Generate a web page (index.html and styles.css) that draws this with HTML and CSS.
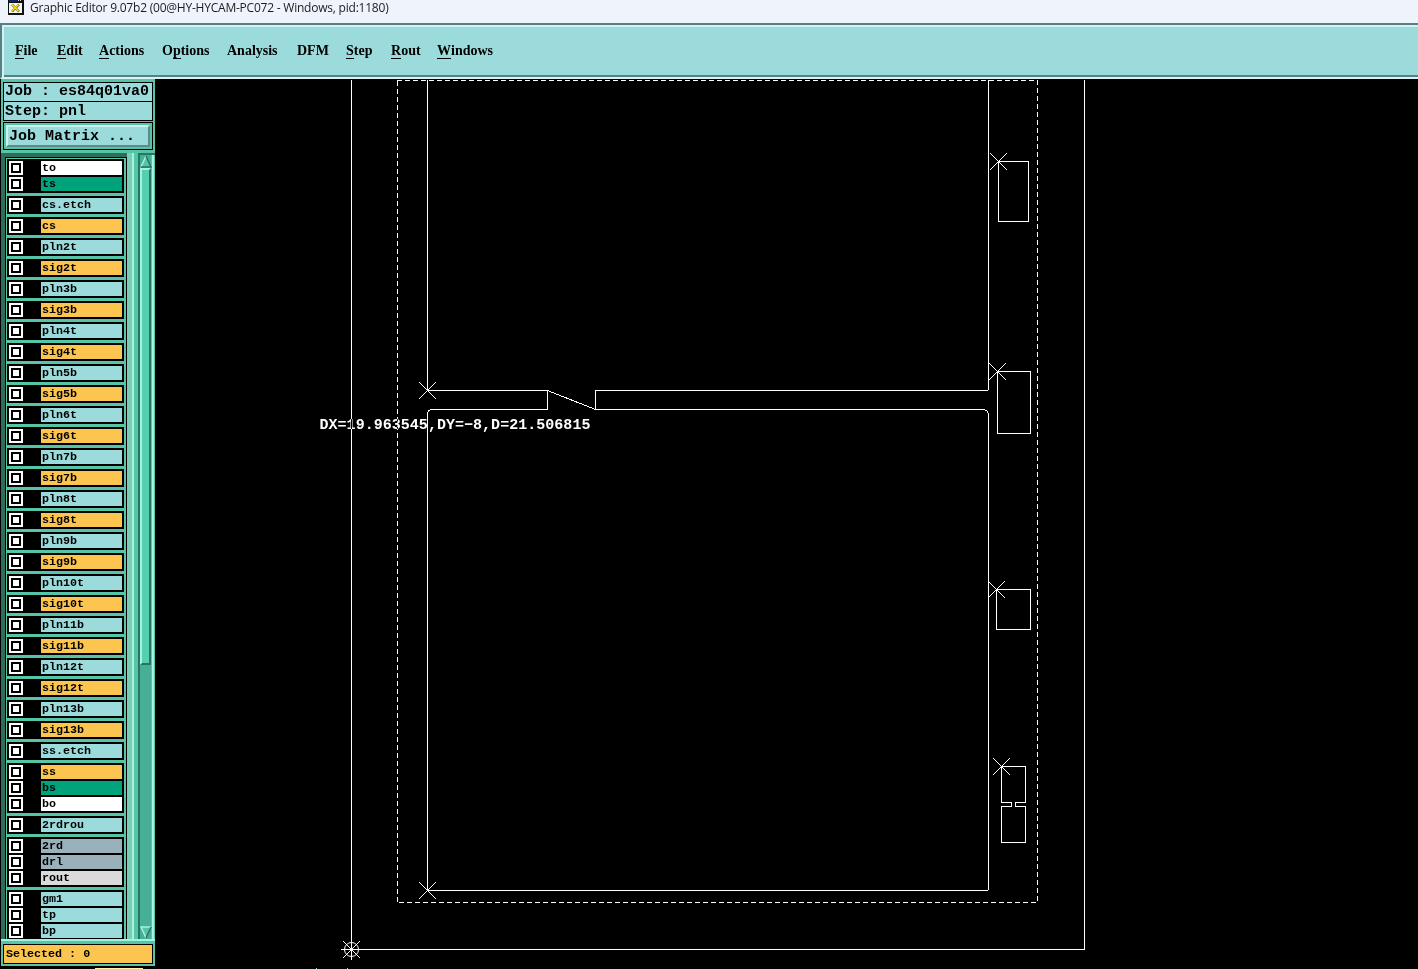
FILE: index.html
```
<!DOCTYPE html>
<html lang="en">
<head>
<meta charset="utf-8">
<title>Graphic Editor</title>
<link rel="stylesheet" href="styles.css">
</head>
<body>
<header class="titlebar">
<svg class="app-icon" width="16" height="15" viewBox="0 0 16 15" shape-rendering="crispEdges"><rect width="16" height="15" fill="#111"/><rect x="1" y="3" width="13" height="10" fill="#f4f6ee"/><path d="M1 0h8v2H1z" fill="#10206c"/><path d="M10 0h1v1h-1zM12 0h1v1h-1z" fill="#ddd"/><g shape-rendering="auto"><path d="M4 4.5l7 7M11 4.5l-7 7" stroke="#555" stroke-width="2.4"/><path d="M4 4.5l6.5 6.5M10.500 4.500l-6.500 6.500" stroke="#f3e01c" stroke-width="1.5"/></g></svg>
<span class="title">Graphic Editor 9.07b2 (00@HY-HYCAM-PC072 - Windows, pid:1180)</span>
</header>
<nav class="menubar"><span class="m-file"><u>F</u>ile</span><span class="m-edit"><u>E</u>dit</span><span class="m-actions"><u>A</u>ctions</span><span class="m-options">O<u>p</u>tions</span><span class="m-analysis">Analysis</span><span class="m-dfm">DFM</span><span class="m-step"><u>S</u>tep</span><span class="m-rout"><u>R</u>out</span><span class="m-windows"><u>W</u>indows</span></nav>
<main class="work">
<aside class="side">
<div class="info"><div class="info-row">Job : es84q01va0</div><div class="info-row">Step: pnl</div></div>
<div class="btn-frame"><button class="matrix">Job Matrix ...</button></div>
<div class="panel">
<div class="list" id="layers"></div>
<div class="ridge"></div>
<div class="scroll">
<svg width="12" height="13" viewBox="0 0 12 13"><path d="M6 1L1 12H11Z" fill="#56c4a6"/><path d="M6 1L1 12" stroke="#a4f2df" stroke-width="1.5"/><path d="M6 1L11 12H1" fill="none" stroke="#287561" stroke-width="1.5"/></svg>
<div class="thumb"></div>
<div class="trough"></div>
<svg width="12" height="13" viewBox="0 0 12 13"><path d="M1 1H11L6 12Z" fill="#56c4a6"/><path d="M11 1H1L6 12" fill="none" stroke="#a4f2df" stroke-width="1.5"/><path d="M11 1L6 12" stroke="#287561" stroke-width="1.5"/></svg>
</div>
</div>
<div class="selected">Selected : 0</div>
<div class="edge"></div>
</aside>
<svg class="canvas" width="1263" height="890" viewBox="155 79 1263 890" fill="none" stroke="#fff" shape-rendering="crispEdges">
<path d="M351.5 80V949.5H1084.5V80"/>
<path d="M397.5 902V80.5M397 80.5H1037.5M1037.5 80V902" stroke-dasharray="5 3"/>
<path d="M397 902.5H1038" stroke-dasharray="5 3" stroke-dashoffset="6"/>
<path d="M427.5 80V390.5H547.5V409.5H432.5Q427.5 409.5 427.5 414.5V890.5H987.5L988.5 889.5V415.5Q988.5 409.5 982.5 409.5H595.5V390.5H987.5L988.5 389.5V80"/>
<path d="M547.5 390.5L595.5 409.5"/>
<path d="M998.5 161.5H1028.5V221.5H998.5ZM997.5 371.5H1030.5V433.5H997.5ZM996.5 589.5H1030.5V629.5H996.5Z"/>
<path d="M1001.5 766.5H1025.5V802.5H1015.5V806.5H1025.5V842.5H1001.5V806.5H1011.5V802.5H1001.5Z"/>
<g shape-rendering="auto">
<path d="M990 153l17 17M1007 153l-17 17M989 363l17 17M1006 363l-17 17M988 581l17 17M1005 581l-17 17M993 758l17 17M1010 758l-17 17M419 382l17 17M436 382l-17 17M419 882l17 17M436 882l-17 17M343 941l17 17M360 941l-17 17"/>
<circle cx="351.5" cy="949.5" r="7"/>
</g>
<path d="M341 949.5H352M351.5 949V960"/>
<path d="M316 968.5h1M347 968.5h1" stroke="#9bdbdb"/>
<text class="measure" x="319.500" y="429">DX=19.963545,DY=−8,D=21.506815</text>
</svg>
</main>
<script src="layers.js"></script>
</body>
</html>
```
FILE: styles.css
```
*,*::after{box-sizing:border-box}
body{margin:0;width:1418px;height:969px;overflow:hidden;background:#000;color:#000;display:flex;flex-direction:column}
.titlebar{height:23px;flex:none;background:#eff3fb;display:flex;gap:6px;padding-left:8px}
.app-icon{flex:none}
.title{font:12px/15px "Open Sans","Noto Sans",sans-serif;white-space:nowrap;letter-spacing:-.22px;color:#1c1c1c}
.menubar{height:56px;flex:none;background:#9bdbdb;border:2px solid #587f82;border-right:0;border-bottom-color:#d9f4f4;box-shadow:inset 2px 2px #d0f3f3,inset 0 -2px #587f82;display:flex;align-items:center;gap:16px;padding:0 0 0 13px;font:bold 14px/18px "Liberation Serif",serif}
.menubar span{white-space:nowrap}
.menubar u{text-decoration:none;border-bottom:1px solid #000;display:inline-block;height:17px;line-height:18px}
.m-file{width:26px}
.m-edit{width:26px}
.m-actions{width:47px}
.m-options{width:49px}
.m-analysis{width:54px}
.m-dfm{width:33px}
.m-step{width:29px}
.m-rout{width:30px}
.m-windows{width:56px}
.work{display:flex;flex:1;min-height:0}
.side{width:154px;margin-left:1px;flex:none;height:890px;background:linear-gradient(#56c4a6 0 887px,#000 887px);display:flex;flex-direction:column;padding:3px 2px 0;font-family:"Liberation Mono","DejaVu Sans Mono",monospace;font-weight:bold}
.info{border:1px solid #000;background:#9bdbdb;height:39px;flex:none}
.info-row{height:18px;padding-left:1px;font-size:15px;line-height:18px;white-space:pre}
.info-row+.info-row{height:19px;border-top:1px solid #000;line-height:19px}
.btn-frame{height:28px;flex:none;margin-top:1px;border:1px solid #000;padding:2px}
.matrix{display:block;width:144px;height:22px;padding:0 0 0 1px;border:2px solid;border-color:#c9f3f1 #5c8b8b #5c8b8b #c9f3f1;background:#9bdbdb;color:#000;text-align:left;font:bold 15px/19px "Liberation Mono",monospace;white-space:pre}
.panel{height:788px;flex:none;margin:3px -2px 0;display:flex;border-bottom:2px solid #a4f2df;background:#56c4a6}
.list{width:126px;flex:none;height:786px;border-left:4px solid #306c5c;border-top:4px solid #306c5c;box-shadow:inset 1px 1px #000,inset -1px 0 #000;padding:2px 3px 0 2px;overflow:hidden;display:flex;flex-direction:column;gap:3px}
.group{flex:none;background:#000;padding:2px;display:flex;flex-direction:column;gap:2px}
.layer{display:flex;height:14px;gap:18px}
.box{width:14px;height:14px;background:#fff;display:grid;place-items:center}
.box::after{content:"";width:10px;height:10px;border:2px solid #000;background:#fff}
.name{width:81px;padding-left:1px;font-size:11.7px;line-height:14px}
.cyan{background:#9bdbdb}
.orange{background:#fcc550}
.green{background:#00a37c}
.white{background:#fff}
.slate{background:#99b1bb}
.grey{background:#dadada}
.ridge{width:11px;flex:none;border-left:2px solid #7acdb5;background:linear-gradient(90deg,#7acdb5 0 3px,#a4f2df 3px 5px,#56c4a6 5px)}
.scroll{width:17px;flex:none;display:flex;flex-direction:column;border-left:2px solid #287561;border-top:2px solid #287561;background:linear-gradient(90deg,#46af95 0 11px,#56c4a6 11px 12px,#a4f2df 12px 14px,#56c4a6 14px)}
.scroll svg{flex:none}
.thumb{width:11px;height:497px;flex:none;background:#54d0b0;border:solid;border-width:2px;border-color:#a4f2df #287561 #287561 #a4f2df}
.trough{flex:1}
.selected{margin-top:3px;height:20px;flex:none;border:1px solid #000;background:#fcc550;padding-left:2px;font-size:11.7px;line-height:18px;white-space:pre}
.edge{margin:4px 0 0 92px;width:48px;height:1px;flex:none;background:#fff3b0}
.canvas{display:block;flex:none}
.measure{font:bold 15px "Liberation Mono",monospace;letter-spacing:.03px;fill:#fff;stroke:none;mix-blend-mode:difference}
```
FILE: layers.js
```
const groups = [
  [['to','white'],['ts','green']],
  ...['cs.etch','cs','pln2t','sig2t','pln3b','sig3b','pln4t','sig4t','pln5b','sig5b','pln6t','sig6t','pln7b','sig7b','pln8t','sig8t','pln9b','sig9b','pln10t','sig10t','pln11b','sig11b','pln12t','sig12t','pln13b','sig13b','ss.etch'].map((n, i) => [[n, i % 2 ? 'orange' : 'cyan']]),
  [['ss','orange'],['bs','green'],['bo','white']],
  [['2rdrou','cyan']],
  [['2rd','slate'],['drl','slate'],['rout','grey']],
  [['gm1','cyan'],['tp','cyan'],['bp','cyan']]
];
document.getElementById('layers').innerHTML = groups.map(g =>
  '<div class="group">' + g.map(([n, c]) => `<div class="layer"><span class="box"></span><span class="name ${c}">${n}</span></div>`).join('') + '</div>'
).join('');
```
